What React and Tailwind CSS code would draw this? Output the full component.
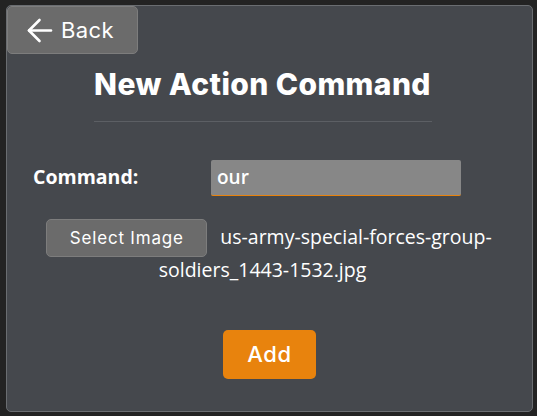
import React from "react";

export default function App() {
  return (
    <div className="w-[537px] h-[416px] bg-[#232323] pt-[5px] pl-[6px] overflow-hidden">
      <div className="w-[527px] h-[407px] border border-[#6a6d71] rounded-[5px] bg-[#45484d] text-white">
        <button className="flex items-center w-[131px] h-[48px] bg-[#6b6b6b] border border-[#7d7d7d] rounded-[5px] pl-[19px] gap-[8px] font-['Inter',sans-serif] text-[22px] tracking-[0.4px] text-white">
          <svg width="26" height="25" viewBox="0 0 26 25" fill="none" stroke="white" strokeWidth="2.6" strokeLinecap="round" strokeLinejoin="round">
            <path d="M24 12.5H2" />
            <path d="M12.5 2L2 12.5L12.5 23" />
          </svg>
          <span>Back</span>
        </button>
        <div className="pr-[14px]">
          <h1 className="mt-[12px] text-center font-['Inter',sans-serif] font-extrabold text-[30px] leading-[36px] tracking-[0.4px]">
            New Action Command
          </h1>
          <div className="mx-auto mt-[19px] w-[338px] h-px bg-[#5c5f64]" />
          <div className="flex items-center mt-[38px] pl-[26px] font-['Open_Sans',sans-serif]">
            <div className="w-[178px] font-bold text-[19.5px] leading-[24px] -mt-[3px]">Command:</div>
            <div className="w-[250px] h-[36px] bg-[#878787] border-b border-[#e8830d] rounded-[2px] pl-[6px] flex items-center text-[19px] font-semibold">
              our
            </div>
          </div>
          <div className="mt-[23px] text-center font-['Open_Sans',sans-serif] text-[19.5px] leading-[25px]">
            <button className="inline-block align-baseline mx-[13px] w-[161px] h-[38px] bg-[#6b6b6b] border border-[#7d7d7d] rounded-[5px] font-['Inter',sans-serif] text-[17px] tracking-[0.8px] text-white">
              Select Image
            </button>
            <span>us-army-special-forces-group-</span>
            <br />
            <span>soldiers_1443-1532.jpg</span>
          </div>
        </div>
        <div className="flex justify-center mt-[48px]">
          <button className="w-[93px] h-[49px] bg-[#e8830d] rounded-[5px] font-['Inter',sans-serif] font-medium text-[22px] tracking-[0.6px] text-white">
            Add
          </button>
        </div>
      </div>
    </div>
  );
}
